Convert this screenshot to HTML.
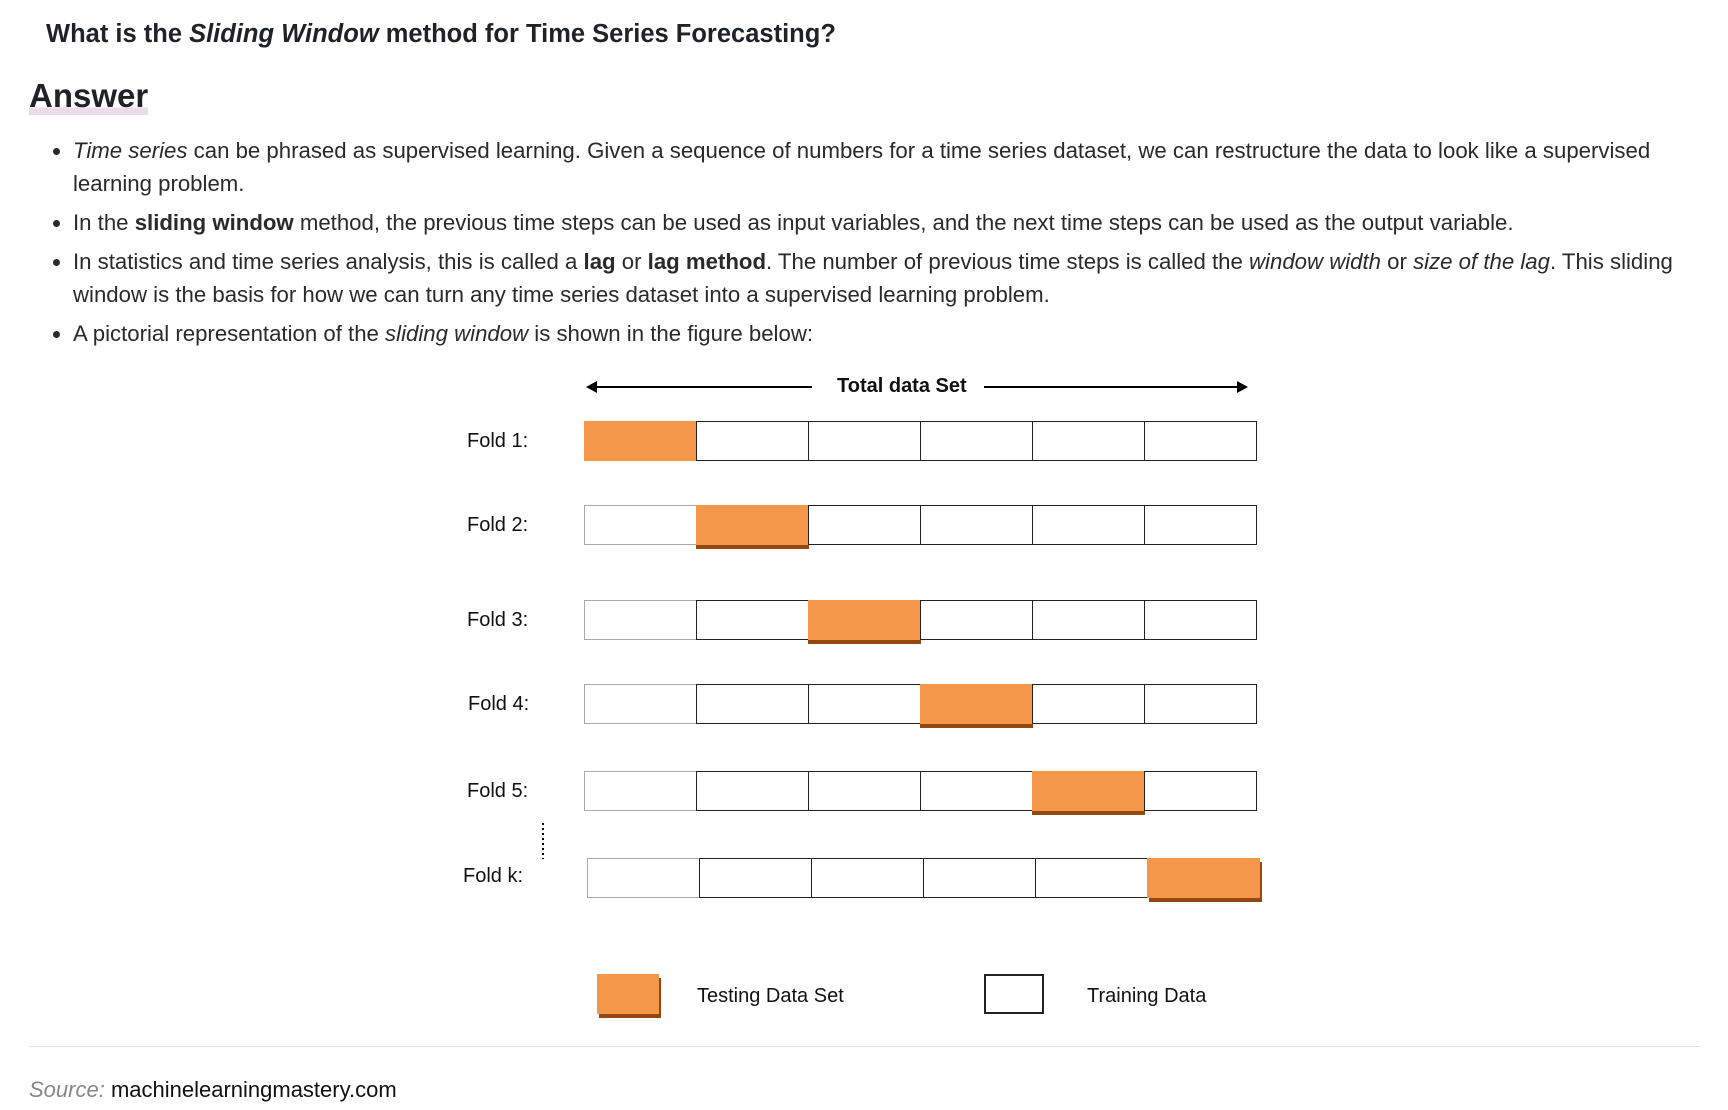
<!DOCTYPE html>
<html><head><meta charset="utf-8"><style>
body{margin:0;width:1728px;height:1110px;background:#fff;font-family:"Liberation Sans",Arial,sans-serif;color:#222;position:relative;overflow:hidden}
.a{position:absolute;white-space:nowrap}
h1{position:absolute;left:46px;top:20px;margin:0;font-size:25.5px;font-weight:bold;color:#1f2328}
h2{position:absolute;left:29px;top:77px;margin:0;font-size:33px;font-weight:bold;color:#1f2328;background:linear-gradient(transparent 80%,#eadcea 80%)}
ul{position:absolute;left:0;top:134px;margin:0;padding-left:73px;width:1622px;font-size:22.2px;line-height:33px;color:#2a2a2a}
li{margin-bottom:6px}
.d{font-family:"Liberation Sans Narrow","Liberation Sans",sans-serif;font-size:20px;color:#111}
.row{position:absolute;height:40px;display:flex}
.c{width:111px;height:38px;border:1px solid #222;margin-right:-1px;box-sizing:content-box;position:relative}
.c.f{border-color:#aaa}
.o{background:#f5974a;border-color:#f5974a}
.o.s{box-shadow:0 4px 0 #94480f}
</style></head><body>
<h1>What is the <i>Sliding Window</i> method for Time Series Forecasting?</h1>
<h2>Answer</h2>
<ul>
<li><i>Time series</i> can be phrased as supervised learning. Given a sequence of numbers for a time series dataset, we can restructure the data to look like a supervised learning problem.</li>
<li>In the <b>sliding window</b> method, the previous time steps can be used as input variables, and the next time steps can be used as the output variable.</li>
<li>In statistics and time series analysis, this is called a <b>lag</b> or <b>lag method</b>. The number of previous time steps is called the <i>window width</i> or <i>size of the lag</i>. This sliding window is the basis for how we can turn any time series dataset into a supervised learning problem.</li>
<li>A pictorial representation of the <i>sliding window</i> is shown in the figure below:</li>
</ul>
<svg class="a" style="left:0;top:0" width="1728" height="1110">
<line x1="593" y1="387" x2="812" y2="387" stroke="#000" stroke-width="2"/><polygon points="586,387 597,381 597,393" fill="#000"/>
<line x1="984" y1="387" x2="1240" y2="387" stroke="#000" stroke-width="2"/><polygon points="1248,387 1237,381 1237,393" fill="#000"/>
<line x1="543" y1="823" x2="543" y2="859" stroke="#000" stroke-width="2" stroke-dasharray="2,3"/>
</svg>
<div class="a d" style="left:837px;top:375px;font-weight:bold;font-size:20px">Total data Set</div>
<div class="a d" style="left:467px;top:430px">Fold 1:</div>
<div class="a d" style="left:467px;top:514px">Fold 2:</div>
<div class="a d" style="left:467px;top:609px">Fold 3:</div>
<div class="a d" style="left:468px;top:693px">Fold 4:</div>
<div class="a d" style="left:467px;top:780px">Fold 5:</div>
<div class="a d" style="left:463px;top:865px">Fold k:</div>
<div class="row" style="left:584px;top:421px"><div class="c o"></div><div class="c"></div><div class="c"></div><div class="c"></div><div class="c"></div><div class="c"></div></div>
<div class="row" style="left:584px;top:505px"><div class="c f"></div><div class="c o s"></div><div class="c"></div><div class="c"></div><div class="c"></div><div class="c"></div></div>
<div class="row" style="left:584px;top:600px"><div class="c f"></div><div class="c"></div><div class="c o s"></div><div class="c"></div><div class="c"></div><div class="c"></div></div>
<div class="row" style="left:584px;top:684px"><div class="c f"></div><div class="c"></div><div class="c"></div><div class="c o s"></div><div class="c"></div><div class="c"></div></div>
<div class="row" style="left:584px;top:771px"><div class="c f"></div><div class="c"></div><div class="c"></div><div class="c"></div><div class="c o s"></div><div class="c"></div></div>
<div class="row" style="left:587px;top:858px"><div class="c f"></div><div class="c"></div><div class="c"></div><div class="c"></div><div class="c"></div><div class="c o s" style="box-shadow:2px 4px 0 #94480f"></div></div>
<div class="a" style="left:597px;top:974px;width:62px;height:40px;background:#f5974a;box-shadow:2px 4px 0 #94480f"></div>
<div class="a d" style="left:697px;top:985px">Testing Data Set</div>
<div class="a" style="left:984px;top:974px;width:60px;height:40px;border:2px solid #222;box-sizing:border-box"></div>
<div class="a d" style="left:1087px;top:985px">Training Data</div>
<div class="a" style="left:29px;top:1046px;width:1671px;height:1px;background:#e3e3e3"></div>
<div class="a" style="left:29px;top:1077px;font-size:22px;color:#111"><i style="color:#888">Source:</i> machinelearningmastery.com</div>
</body></html>
